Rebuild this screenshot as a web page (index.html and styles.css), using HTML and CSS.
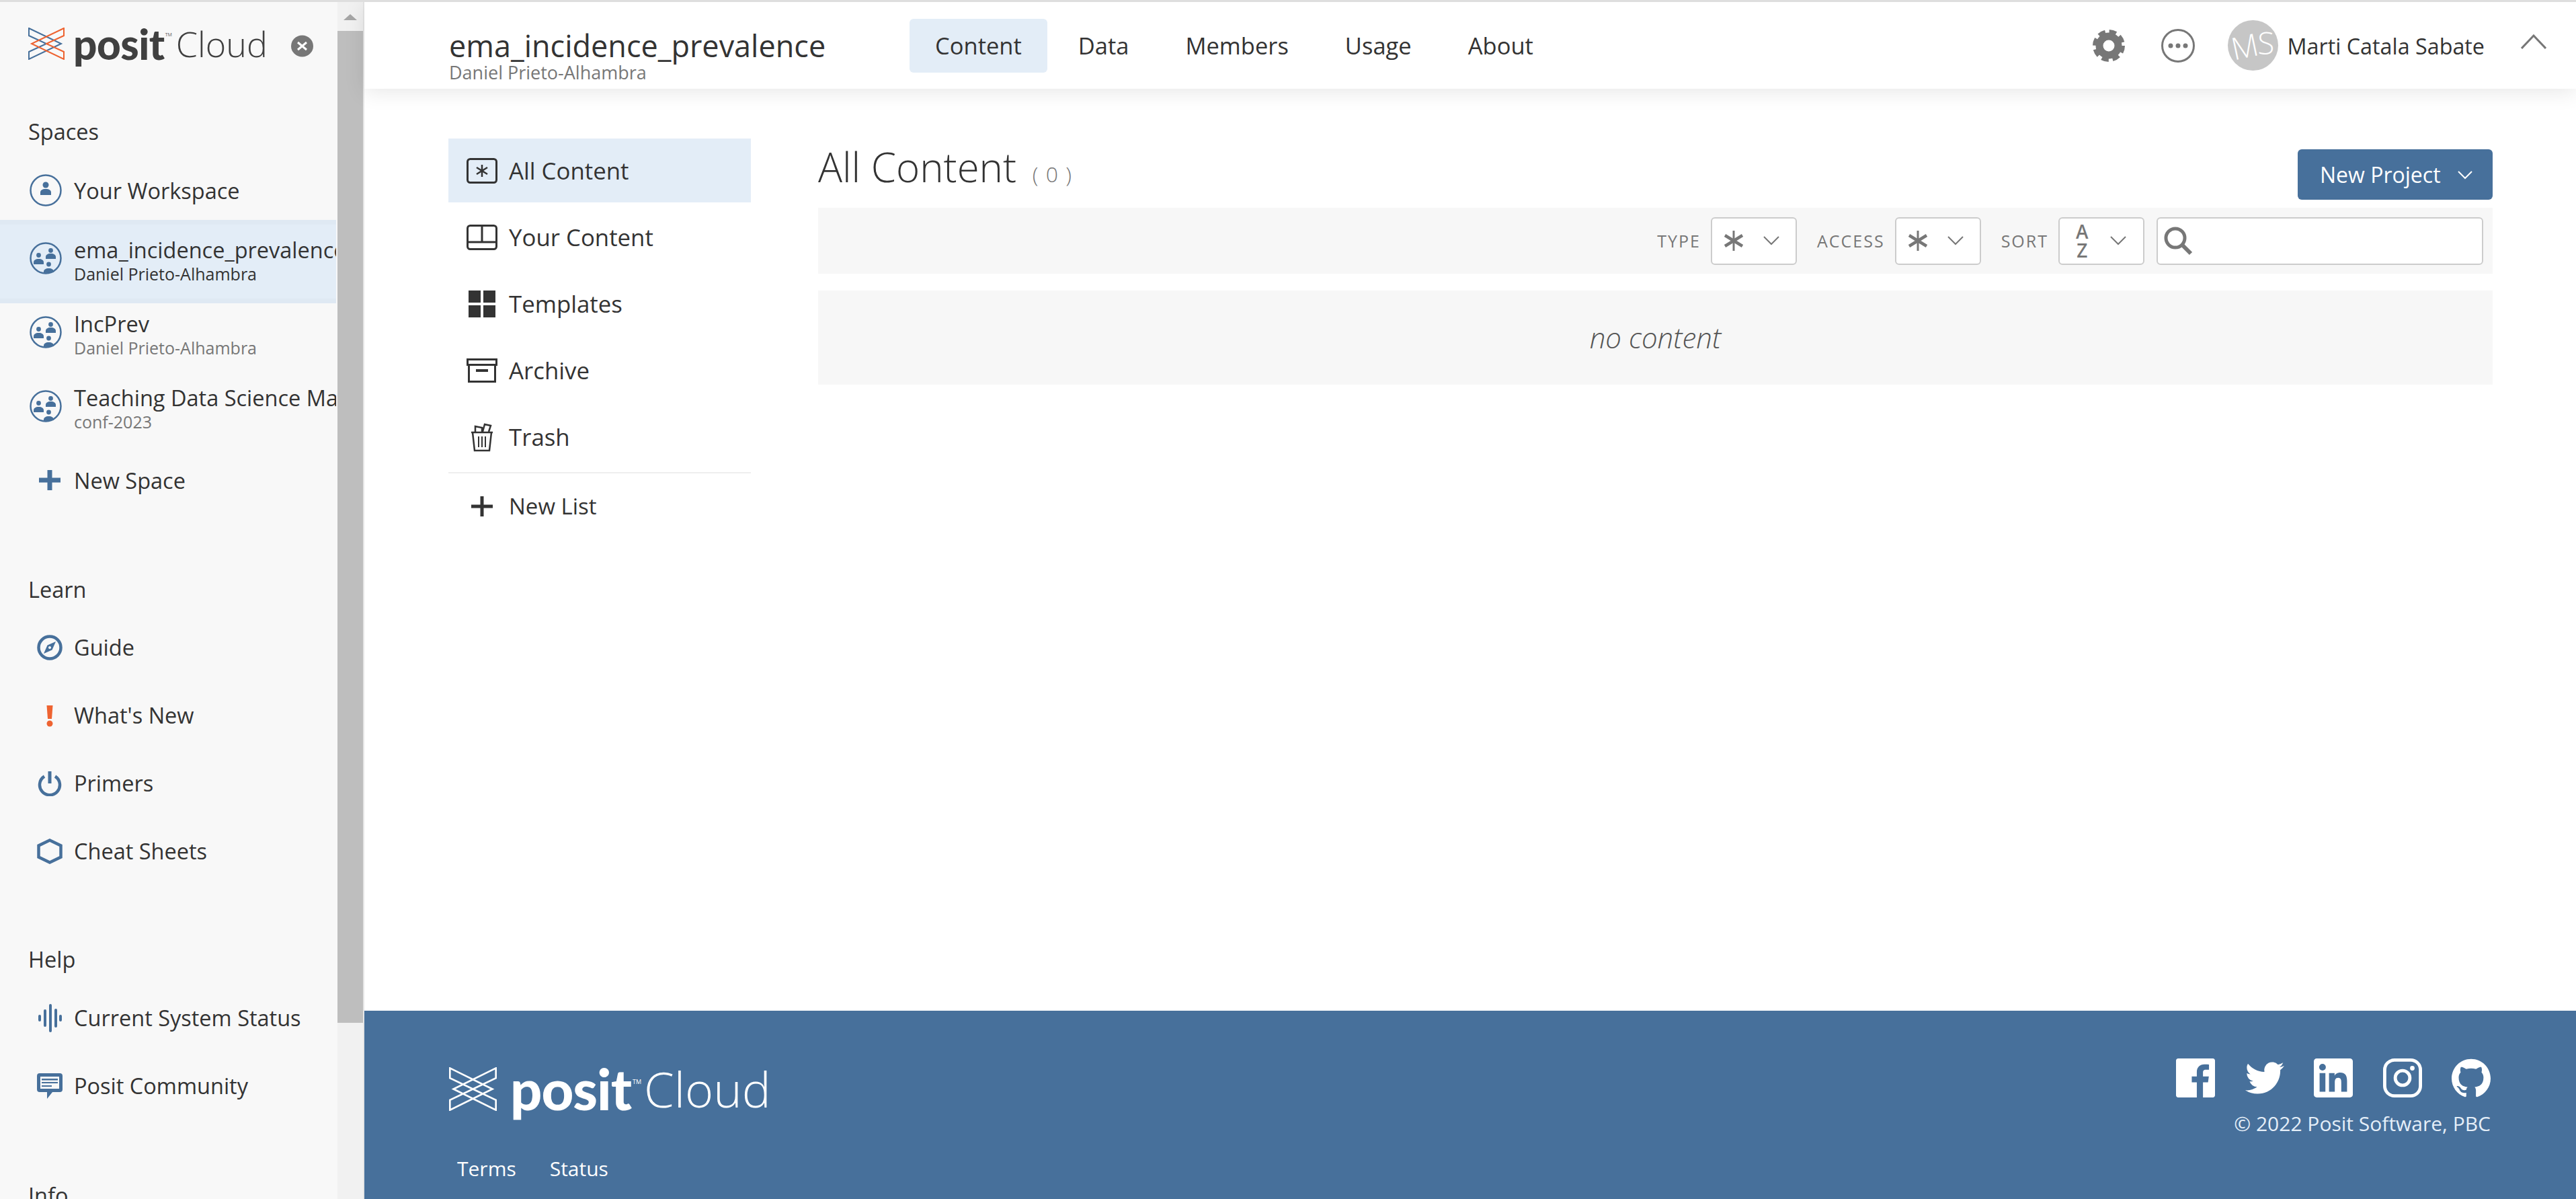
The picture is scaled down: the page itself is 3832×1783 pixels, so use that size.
FILE: index.html
```html
<!DOCTYPE html>
<html lang="en">

<head>
    <meta charset="UTF-8">
    <meta name="viewport" content="width=device-width, initial-scale=1.0">
    <title>ema_incidence_prevalence - Posit Cloud</title>
    <link rel="stylesheet" href="styles.css">
</head>

<body>
    <svg class="defs" width="0" height="0">
        <symbol id="mark" viewBox="0 0 54 48" preserveAspectRatio="none">
            <path class="mark-a" d="M1 1 L49 24 L1 47 V36 L27 24 L1 12 Z" />
            <path class="mark-b" d="M53 1 L5 24 L53 47 V36 L27 24 L53 12 Z" />
        </symbol>
        <symbol id="people" viewBox="0 0 48 48">
            <circle cx="24" cy="24" r="22.5" fill="none" stroke="currentColor" stroke-width="2.5" />
            <circle cx="13.5" cy="19.5" r="3.4" />
            <path d="M6 33v-3c0-3 3-5 7.500-5s7.500 2 7.500 5v3z" />
            <circle cx="31.500" cy="12.500" r="3.400" />
            <path d="M24 25v-3c0-3 3-5 7.500-5s7.500 2 7.500 5v3z" />
            <circle cx="28.500" cy="33" r="3.400" />
            <path d="M21 46v-2c0-3 3-5 7.500-5s7.500 2 7.500 5v1z" />
        </symbol>
    </svg>

    <aside class="sidebar">
        <nav class="side-nav">
            <div class="brand">
                <svg class="brand-mark" width="54" height="48"><use href="#mark" /></svg>
                <span class="brand-posit">posit</span>
                <span class="brand-tm">TM</span>
                <span class="brand-cloud">Cloud</span>
                <svg class="brand-close" width="33" height="33" viewBox="0 0 33 33">
                    <ellipse cx="16.500" cy="16.500" rx="16.500" ry="16" fill="#777" />
                    <path d="M10 11 L23 22 M23 11 L10 22" stroke="#fff" stroke-width="3" />
                </svg>
            </div>

            <div class="side-label first">Spaces</div>
            <a class="side-item workspace">
                <svg class="space-icon" width="48" height="48" viewBox="0 0 48 48">
                    <circle cx="24" cy="24" r="22.500" fill="none" stroke="currentColor" stroke-width="2.500" />
                    <circle cx="24" cy="16" r="4.500" />
                    <path d="M16 31v-4c0-3 3-5 8-5s8 2 8 5v4z" />
                </svg>
                <span>Your Workspace</span>
            </a>
            <a class="space-item active">
                <svg class="space-icon" width="48" height="48"><use href="#people" /></svg>
                <span class="space-text"><b>ema_incidence_prevalence</b><small>Daniel Prieto-Alhambra</small></span>
            </a>
            <a class="space-item">
                <svg class="space-icon" width="48" height="48"><use href="#people" /></svg>
                <span class="space-text"><b>IncPrev</b><small>Daniel Prieto-Alhambra</small></span>
            </a>
            <a class="space-item">
                <svg class="space-icon" width="48" height="48"><use href="#people" /></svg>
                <span class="space-text"><b>Teaching Data Science Masterclass</b><small>conf-2023</small></span>
            </a>
            <a class="side-item">
                <svg class="side-icon" width="38" height="38" viewBox="0 0 38 38"><path d="M15.500 4h7v11.500H35v7H22.500V34h-7V22.500H3v-7h12.500z" /></svg>
                <span>New Space</span>
            </a>

            <div class="side-label learn">Learn</div>
            <a class="side-item tall">
                <svg class="side-icon" width="38" height="38" viewBox="0 0 38 38">
                    <circle cx="19" cy="19" r="16.500" fill="none" stroke="currentColor" stroke-width="4.500" />
                    <path fill-rule="evenodd" d="M28 10 L22.500 22.500 L10 28 L15.500 15.500z M19 17a2 2 0 1 0 .01 0z" />
                </svg>
                <span>Guide</span>
            </a>
            <a class="side-item tall">
                <svg class="side-icon orange" width="38" height="38" viewBox="0 0 38 38">
                    <path d="M14.500 4h9L22 24h-6z" /><circle cx="19" cy="31" r="4.500" />
                </svg>
                <span>What's New</span>
            </a>
            <a class="side-item tall">
                <svg class="side-icon" width="38" height="38" viewBox="0 0 38 38">
                    <path d="M11 8.500a15 15 0 1 0 16 0" fill="none" stroke="currentColor" stroke-width="4.500" />
                    <path d="M16.500 1h5v18h-5z" />
                </svg>
                <span>Primers</span>
            </a>
            <a class="side-item tall">
                <svg class="side-icon" width="38" height="38" viewBox="0 0 38 38">
                    <path d="M19 2.500 L35.500 10.500 V27.500 L19 35.500 L2.500 27.500 V10.500z" fill="none" stroke="currentColor" stroke-width="4.500" />
                </svg>
                <span>Cheat Sheets</span>
            </a>

            <div class="side-label help">Help</div>
            <a class="side-item tall">
                <svg class="side-icon" width="38" height="44" viewBox="0 0 38 44">
                    <rect x="2" y="17" width="4" height="10" rx="2" /><rect x="10" y="9" width="4" height="26" rx="2" />
                    <rect x="18" y="1" width="4" height="42" rx="2" /><rect x="26" y="8" width="4" height="28" rx="2" />
                    <rect x="33" y="17" width="4" height="10" rx="2" />
                </svg>
                <span>Current System Status</span>
            </a>
            <a class="side-item tall">
                <svg class="side-icon" width="38" height="40" viewBox="0 0 38 40">
                    <path fill-rule="evenodd" d="M4 1h30a4 4 0 0 1 4 4v20a4 4 0 0 1-4 4H23l-8 10v-10H4a4 4 0 0 1-4-4V5a4 4 0 0 1 4-4z M5 6v18h28V6z" />
                    <path d="M7 9h24v2.500H7z M7 14h24v2H7z M7 19h15v2H7z" />
                </svg>
                <span>Posit Community</span>
            </a>

            <div class="side-label info">Info</div>
        </nav>
        <div class="scrollbar">
            <div class="scroll-up"></div>
            <div class="scroll-thumb"></div>
        </div>
    </aside>

    <div class="page">
        <header class="topbar">
            <div class="space-title">
                <div class="space-name">ema_incidence_prevalence</div>
                <div class="space-owner">Daniel Prieto-Alhambra</div>
            </div>
            <nav class="tabs">
                <a class="tab current">Content</a>
                <a class="tab">Data</a>
                <a class="tab">Members</a>
                <a class="tab">Usage</a>
                <a class="tab">About</a>
            </nav>
            <div class="account">
                <svg class="gear" width="48" height="48" viewBox="0 0 48 48">
                    <circle cx="24" cy="24" r="14" fill="none" stroke="#777" stroke-width="11" />
                    <circle cx="24" cy="24" r="21" fill="none" stroke="#777" stroke-width="6" stroke-dasharray="10.500 6" />
                </svg>
                <svg class="more" width="50" height="50" viewBox="0 0 50 50">
                    <circle cx="25" cy="25" r="23.500" fill="none" stroke="#777" stroke-width="3" />
                    <circle cx="14" cy="25" r="3.500" fill="#777" /><circle cx="25" cy="25" r="3.500" fill="#777" /><circle cx="36" cy="25" r="3.500" fill="#777" />
                </svg>
                <div class="avatar"><span class="avatar-m">M</span><span class="avatar-s">S</span></div>
                <span class="user-name">Marti Catala Sabate</span>
                <svg class="collapse" width="38" height="22" viewBox="0 0 38 22">
                    <path d="M1 21 L19 2 L37 21" fill="none" stroke="#777" stroke-width="3" />
                </svg>
            </div>
        </header>

        <main class="content">
            <ul class="list-nav">
                <li class="list-item current">
                    <svg class="list-icon" width="46" height="38" viewBox="0 0 46 38">
                        <rect x="1.500" y="1.500" width="43" height="35" rx="4" fill="none" stroke="#333" stroke-width="3" />
                        <path d="M23 10v18 M15 14l16 10 M31 14l-16 10" stroke="#333" stroke-width="2.500" fill="none" />
                    </svg>
                    All Content
                </li>
                <li class="list-item">
                    <svg class="list-icon" width="46" height="38" viewBox="0 0 46 38">
                        <rect x="1.500" y="1.500" width="43" height="35" rx="4" fill="none" stroke="#333" stroke-width="3" />
                        <path d="M1.500 26h43 M23 1.500V26" stroke="#333" stroke-width="3" fill="none" />
                    </svg>
                    Your Content
                </li>
                <li class="list-item">
                    <svg class="list-icon" width="46" height="40" viewBox="0 0 46 40">
                        <path fill="#333" d="M3 0h18v18H3z M25 0h18v18H25z M3 22h18v18H3z M25 22h18v18H25z" />
                    </svg>
                    Templates
                </li>
                <li class="list-item">
                    <svg class="list-icon" width="46" height="36" viewBox="0 0 46 36">
                        <path d="M1.500 1.500h43v8h-43z M3.500 9.500v25h39v-25" fill="none" stroke="#333" stroke-width="3" />
                        <path d="M14 16h18v4H14z" fill="#333" />
                    </svg>
                    Archive
                </li>
                <li class="list-item">
                    <svg class="list-icon" width="46" height="44" viewBox="0 0 46 44">
                        <path d="M9 15h28l-3 27H12z M7 15h32" fill="none" stroke="#333" stroke-width="2.500" />
                        <path d="M13 14V6l10 2v6 M24 14l3-11 9 2-3 9" fill="none" stroke="#333" stroke-width="2.500" />
                        <path d="M18 21v16 M23 21v16 M28 21v16" stroke="#333" stroke-width="2" />
                    </svg>
                    Trash
                </li>
                <li class="list-item new-list">
                    <svg class="list-icon" width="46" height="30" viewBox="0 0 46 30">
                        <path d="M20.500 0h5v12.500H39v5H25.500V30h-5V17.500H7v-5h13.500z" fill="#333" />
                    </svg>
                    New List
                </li>
            </ul>

            <section class="listing">
                <div class="listing-head">
                    <h1 class="listing-title">All Content <span class="count">( 0 )</span></h1>
                    <button class="new-project">New Project
                        <svg width="24" height="14" viewBox="0 0 24 14"><path d="M2 2 L12 12 L22 2" fill="none" stroke="#fff" stroke-width="2" /></svg>
                    </button>
                </div>
                <div class="filters">
                    <span class="filter-label">TYPE</span>
                    <div class="select">
                        <svg width="34" height="30" viewBox="0 0 34 30"><path d="M17 0v30" stroke="#777" stroke-width="3" /><path d="M4 7l26 16 M30 7L4 23" stroke="#777" stroke-width="4.500" fill="none" /></svg>
                        <svg width="26" height="14" viewBox="0 0 26 14"><path d="M2 1 L13 12 L24 1" fill="none" stroke="#777" stroke-width="2" /></svg>
                    </div>
                    <span class="filter-label">ACCESS</span>
                    <div class="select">
                        <svg width="34" height="30" viewBox="0 0 34 30"><path d="M17 0v30" stroke="#777" stroke-width="3" /><path d="M4 7l26 16 M30 7L4 23" stroke="#777" stroke-width="4.500" fill="none" /></svg>
                        <svg width="26" height="14" viewBox="0 0 26 14"><path d="M2 1 L13 12 L24 1" fill="none" stroke="#777" stroke-width="2" /></svg>
                    </div>
                    <span class="filter-label">SORT</span>
                    <div class="select sort">
                        <div class="az"><span>A</span><span>Z</span></div>
                        <svg width="26" height="14" viewBox="0 0 26 14"><path d="M2 1 L13 12 L24 1" fill="none" stroke="#777" stroke-width="2" /></svg>
                    </div>
                    <div class="search">
                        <svg width="44" height="44" viewBox="0 0 44 44">
                            <circle cx="18" cy="18" r="14" fill="none" stroke="#777" stroke-width="5" />
                            <path d="M28 28 L41 41" stroke="#777" stroke-width="6" />
                        </svg>
                    </div>
                </div>
                <div class="empty">no content</div>
            </section>
        </main>

        <footer class="footer">
            <div class="footer-left">
                <div class="footer-brand">
                    <svg class="footer-mark" width="71" height="65"><use href="#mark" /></svg>
                    <span class="footer-posit">posit</span>
                    <span class="footer-tm">TM</span>
                    <span class="footer-cloud">Cloud</span>
                </div>
                <div class="footer-links"><a>Terms</a><a>Status</a></div>
            </div>
            <div class="footer-right">
                <div class="socials">
                    <svg width="58" height="58" viewBox="0 0 24 24"><path d="M22.700 0H1.300C.6 0 0 .6 0 1.300v21.400C0 23.400.6 24 1.300 24h11.500v-9.300H9.700v-3.600h3.100V8.400c0-3.100 1.900-4.800 4.700-4.800 1.300 0 2.500.1 2.800.1v3.200h-1.900c-1.500 0-1.800.7-1.800 1.800v2.400h3.600l-.5 3.600h-3.100V24h6.100c.7 0 1.300-.6 1.300-1.300V1.300C24 .6 23.400 0 22.700 0z" /></svg>
                    <svg width="58" height="58" viewBox="0 0 24 24"><path d="M23.953 4.570a10 10 0 01-2.825.775 4.958 4.958 0 002.163-2.723c-.951.555-2.005.959-3.127 1.184a4.920 4.920 0 00-8.384 4.482C7.690 8.095 4.067 6.130 1.640 3.162a4.822 4.822 0 00-.666 2.475c0 1.710.870 3.213 2.188 4.096a4.904 4.904 0 01-2.228-.616v.060a4.923 4.923 0 003.946 4.827 4.996 4.996 0 01-2.212.085 4.936 4.936 0 004.604 3.417 9.867 9.867 0 01-6.102 2.105c-.390 0-.779-.023-1.170-.067a13.995 13.995 0 007.557 2.209c9.053 0 13.998-7.496 13.998-13.985 0-.210 0-.420-.015-.630A9.935 9.935 0 0024 4.590z" /></svg>
                    <svg width="58" height="58" viewBox="0 0 24 24"><path d="M20.447 20.452h-3.554v-5.569c0-1.328-.027-3.037-1.852-3.037-1.853 0-2.136 1.445-2.136 2.939v5.667H9.351V9h3.414v1.561h.046c.477-.9 1.637-1.850 3.370-1.850 3.601 0 4.267 2.370 4.267 5.455v6.286zM5.337 7.433a2.062 2.062 0 01-2.063-2.065 2.064 2.064 0 112.063 2.065zm1.782 13.019H3.555V9h3.564v11.452zM22.225 0H1.771C.792 0 0 .774 0 1.729v20.542C0 23.227.792 24 1.771 24h20.451C23.200 24 24 23.227 24 22.271V1.729C24 .774 23.200 0 22.222 0h.003z" /></svg>
                    <svg width="58" height="58" viewBox="0 0 24 24">
                        <rect x="1" y="1" width="22" height="22" rx="6" fill="none" stroke="#fff" stroke-width="2" />
                        <circle cx="12" cy="12" r="4.500" fill="none" stroke="#fff" stroke-width="2" />
                        <circle cx="18" cy="6" r="1.400" />
                    </svg>
                    <svg width="58" height="58" viewBox="0 0 24 24"><path d="M12 .297c-6.630 0-12 5.373-12 12 0 5.303 3.438 9.800 8.205 11.385.6.113.820-.258.820-.577 0-.285-.010-1.040-.015-2.040-3.338.724-4.042-1.610-4.042-1.610C4.422 18.070 3.633 17.700 3.633 17.700c-1.087-.744.084-.729.084-.729 1.205.084 1.838 1.236 1.838 1.236 1.070 1.835 2.809 1.305 3.495.998.108-.776.417-1.305.760-1.605-2.665-.3-5.466-1.332-5.466-5.930 0-1.310.465-2.380 1.235-3.220-.135-.303-.540-1.523.105-3.176 0 0 1.005-.322 3.300 1.230.960-.267 1.980-.399 3-.405 1.020.006 2.040.138 3 .405 2.280-1.552 3.285-1.230 3.285-1.230.645 1.653.240 2.873.120 3.176.765.840 1.230 1.910 1.230 3.220 0 4.610-2.805 5.625-5.475 5.920.420.360.810 1.096.810 2.220 0 1.606-.015 2.896-.015 3.286 0 .315.210.690.825.570C20.565 22.092 24 17.592 24 12.297c0-6.627-5.373-12-12-12" /></svg>
                </div>
                <div class="copyright">© 2022 Posit Software, PBC</div>
            </div>
        </footer>
    </div>
</body>

</html>
```

FILE: styles.css
```css
* {
    box-sizing: border-box;
}

html,
body {
    height: 100%;
}

body {
    margin: 0;
    display: flex;
    height: 100vh;
    overflow: hidden;
    border-top: 3px solid #dedede;
    background: #fff;
    color: #333;
    font-family: "Open Sans", "Liberation Sans", sans-serif;
}

.defs {
    position: absolute;
}

.mark-a {
    fill: none;
    stroke: var(--mark-a, #47709b);
    stroke-width: 2;
}

.mark-b {
    fill: none;
    stroke: var(--mark-b, #ee6331);
    stroke-width: 2;
}

/* sidebar */

.sidebar {
    display: flex;
    flex: 0 0 542px;
    height: 100%;
    background: #f8f8f8;
    border-right: 2px solid #e6e6e6;
}

.side-nav {
    flex: 0 0 500px;
    margin-right: 2px;
    overflow: hidden;
}

.brand {
    display: flex;
    align-items: center;
    height: 130px;
    padding: 0 0 6px 42px;
}

.brand-mark {
    flex: none;
}

.brand-posit {
    margin-left: 13px;
    font-family: Lato, sans-serif;
    font-weight: 900;
    font-size: 62px;
    line-height: 1;
    letter-spacing: -0.5px;
    color: #404040;
}

.brand-tm {
    align-self: flex-start;
    margin: 44px 0 0 1px;
    font-size: 7px;
    color: #555;
}

.brand-cloud {
    margin-left: 6px;
    font-weight: 300;
    font-size: 52px;
    line-height: 1;
    color: #404040;
}

.brand-close {
    margin: 6px 0 0 35px;
    flex: none;
}

.side-label {
    height: 50px;
    padding-left: 42px;
    font-size: 32.5px;
    line-height: 50px;
    white-space: nowrap;
}

.side-label.first {
    margin-top: 38px;
}

.side-label.learn {
    margin-top: 88px;
    margin-bottom: 10px;
}

.side-label.help {
    margin-top: 86px;
    margin-bottom: 11px;
}

.side-label.info {
    margin-top: 88px;
}

.side-item {
    display: flex;
    align-items: center;
    height: 100px;
    padding-left: 110px;
    position: relative;
    font-size: 32.5px;
    white-space: nowrap;
}

.side-item.tall {
    height: 101px;
}

.side-item.workspace {
    height: 94px;
    margin-top: 19px;
    padding-bottom: 8px;
}

.side-icon {
    position: absolute;
    left: 55px;
    fill: #47709b;
    color: #47709b;
}

.side-icon.orange {
    fill: #ee6331;
}

.space-icon {
    position: absolute;
    left: 44px;
    top: 50%;
    margin-top: -24px;
    fill: #47709b;
    color: #47709b;
}

.side-item.workspace .space-icon {
    margin-top: -28px;
}

.space-item {
    display: block;
    position: relative;
    height: 110px;
    padding-left: 110px;
    overflow: hidden;
    white-space: nowrap;
}

.space-item .space-icon {
    margin-top: -29px;
}

.space-item.active {
    overflow: visible;
    background: #e3edf7;
    box-shadow: 0 0 0 7px #dfe9f3;
    clip-path: inset(-7px 0);
}

.space-text {
    display: block;
    padding-top: 17px;
}

.space-text b {
    display: block;
    font-weight: 400;
    font-size: 32.5px;
    line-height: 42px;
}

.space-text small {
    display: block;
    font-size: 25px;
    line-height: 28px;
    color: #777;
}

.active .space-text small {
    color: #333;
}

.scrollbar {
    flex: 0 0 38px;
    display: flex;
    flex-direction: column;
    background: #f1f1f1;
}

.scroll-up {
    height: 43px;
    position: relative;
}

.scroll-up::after {
    content: "";
    position: absolute;
    left: 9px;
    top: 18px;
    border-left: 10px solid transparent;
    border-right: 10px solid transparent;
    border-bottom: 9px solid #a6a6a6;
}

.scroll-thumb {
    height: 1475px;
    background: #bebebe;
}

/* main column */

.page {
    flex: 1;
    min-width: 0;
    display: flex;
    flex-direction: column;
}

.topbar {
    display: flex;
    align-items: center;
    flex: none;
    height: 129px;
    padding-left: 126px;
    background: #fff;
    box-shadow: 0 4px 30px rgba(0, 0, 0, 0.1);
    position: relative;
}

.space-title {
    flex: 0 0 685px;
    align-self: flex-start;
    padding-top: 40px;
}

.space-name {
    font-size: 45px;
    line-height: 50px;
    white-space: nowrap;
}

.space-owner {
    margin-top: 1px;
    font-size: 27px;
    line-height: 28px;
    color: #777;
    white-space: nowrap;
}

.tabs {
    display: flex;
    gap: 8px;
}

.tab {
    height: 80px;
    padding: 0 38px;
    border-radius: 6px;
    font-size: 34.5px;
    line-height: 80px;
}

.tab.current {
    background: #e3edf7;
}

.account {
    display: flex;
    align-items: center;
    margin-left: auto;
    padding-right: 44px;
}

.more {
    margin-left: 54px;
}

.avatar {
    display: flex;
    align-items: center;
    justify-content: center;
    width: 75px;
    height: 75px;
    margin-left: 49px;
    border-radius: 50%;
    background: #c6c6c6;
    color: #fff;
    font-weight: 300;
    font-size: 46px;
}

.avatar-m {
    transform: rotate(-12deg);
}

.avatar-s {
    transform: translateY(-5px);
}

.user-name {
    margin-left: 14px;
    font-size: 32.3px;
    white-space: nowrap;
}

.collapse {
    margin-left: 54px;
    margin-top: -12px;
}

/* content area */

.content {
    flex: 1;
    min-height: 0;
    display: flex;
    padding: 74px 124px 0 125px;
}

.list-nav {
    flex: 0 0 450px;
    margin: 0 100px 0 0;
    padding: 0;
    list-style: none;
}

.list-item {
    display: flex;
    align-items: center;
    height: 99px;
    font-size: 34.8px;
}

.list-item.current {
    height: 95px;
    margin-bottom: 2px;
    background: #e3edf7;
}

.list-icon {
    flex: none;
    margin: 0 17px 0 27px;
}

.new-list {
    margin-top: 3px;
    border-top: 2px solid #eee;
    font-size: 33px;
}

.listing {
    flex: 1;
    min-width: 0;
}

.listing-head {
    display: flex;
    align-items: flex-start;
    justify-content: space-between;
    height: 103px;
}

.listing-title {
    margin: 0;
    font-weight: 300;
    font-size: 60px;
    line-height: 84px;
}

.count {
    margin-left: 8px;
    font-size: 32px;
    letter-spacing: 1.5px;
    color: #777;
}

.new-project {
    display: flex;
    align-items: center;
    gap: 24px;
    width: 290px;
    height: 75px;
    margin-top: 16px;
    padding: 0 0 0 33px;
    border: none;
    border-radius: 6px;
    background: #47709b;
    color: #fff;
    font-family: inherit;
    font-size: 32px;
}

.filters {
    display: flex;
    align-items: center;
    justify-content: flex-end;
    height: 98px;
    padding-right: 14px;
    background: #f7f7f7;
}

.filter-label {
    margin: 0 15px 0 30px;
    font-size: 25px;
    letter-spacing: 2px;
    color: #777;
}

.select {
    display: flex;
    align-items: center;
    justify-content: space-between;
    width: 128px;
    height: 71px;
    padding: 0 23px 0 15px;
    border: 2px solid #ccc;
    border-radius: 6px;
    background: #fff;
}

.select.sort {
    padding: 0 24px 0 24px;
}

.az {
    font-weight: 600;
    font-size: 28px;
    color: #777;
    text-align: center;
}

.az span {
    display: block;
    height: 28px;
    line-height: 28px;
}

.search {
    display: flex;
    align-items: center;
    width: 486px;
    height: 71px;
    margin-left: 18px;
    padding-left: 8px;
    border: 2px solid #ccc;
    border-radius: 6px;
    background: #fff;
}

.empty {
    height: 140px;
    margin-top: 25px;
    background: #f7f7f7;
    color: #555;
    font-style: italic;
    font-weight: 300;
    font-size: 42px;
    line-height: 140px;
    text-align: center;
}

/* footer */

.footer {
    flex: none;
    display: flex;
    justify-content: space-between;
    height: 280px;
    padding: 71px 127px 0 126px;
    background: #47709b;
    color: #fff;
}

.footer-brand {
    display: flex;
    align-items: center;
    height: 90px;
}

.footer-mark {
    --mark-a: #fff;
    --mark-b: #fff;
}

.footer-posit {
    margin-left: 20px;
    font-family: Lato, sans-serif;
    font-weight: 900;
    font-size: 83px;
    line-height: 1;
    letter-spacing: -1px;
}

.footer-tm {
    align-self: flex-start;
    margin: 28px 0 0 2px;
    font-size: 9px;
}

.footer-cloud {
    margin-left: 4px;
    font-weight: 300;
    font-size: 72px;
    line-height: 1;
}

.footer-links {
    display: flex;
    gap: 50px;
    margin-top: 53px;
    padding-left: 12px;
    font-size: 30px;
}

.footer-right {
    display: flex;
    flex-direction: column;
    align-items: flex-end;
}

.socials {
    display: flex;
    gap: 44.5px;
    fill: #fff;
}

.copyright {
    margin-top: 18px;
    font-size: 30px;
    color: #e4eef8;
}
```
